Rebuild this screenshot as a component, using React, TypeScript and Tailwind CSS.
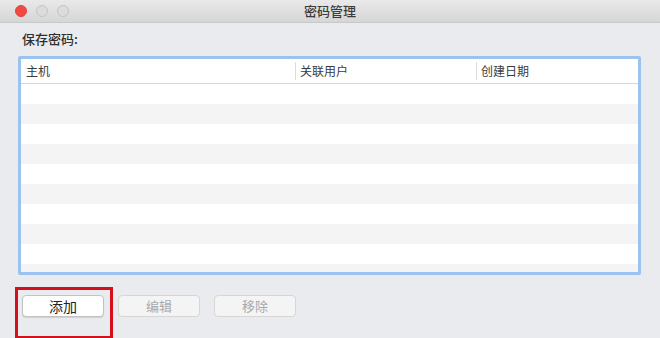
const columns = [
  { title: '主机', width: 'w-[274px]' },
  { title: '关联用户', width: 'w-[181px]' },
  { title: '创建日期', width: 'flex-1' },
];

const rowCount = 10;

export default function App() {
  return (
    <div
      className="relative w-[660px] h-[338px] overflow-hidden bg-[#eaebee] text-[#333]"
      style={{ fontFamily: '"Noto Sans CJK SC", "Noto Sans", sans-serif' }}
    >
      {/* Title bar */}
      <div className="grid grid-cols-[1fr_auto_1fr] items-center h-[23px] border-b border-[#c8c8c8] bg-gradient-to-b from-[#e9e9e9] to-[#d6d6d6]">
        <div className="flex items-center gap-[9px] pl-[15px]">
          <span className="w-[12px] h-[12px] rounded-full bg-[#f04a43] border border-[#e0443e]" />
          <span className="w-[12px] h-[12px] rounded-full bg-[#dcdcdc] border border-[#c4c4c4]" />
          <span className="w-[12px] h-[12px] rounded-full bg-[#dcdcdc] border border-[#c4c4c4]" />
        </div>
        <div className="text-[13px] leading-[16px] font-medium text-[#3c3c3c]">密码管理</div>
        <div />
      </div>

      {/* Body */}
      <div className="px-[18px]">
        <div className="pt-[8px] pl-[4px] text-[13px] leading-[16px] font-medium text-[#2f2f2f]">保存密码:</div>

        {/* Table with focus ring */}
        <div className="mt-[9px] w-[623px] h-[219px] border-[3px] border-[#9cc2f0] rounded-[2px] bg-white overflow-hidden">
          <div className="flex h-[25px] border-b border-[#d6d6d6] bg-white text-[12px] leading-[16px] text-[#3a3a3a]">
            {columns.map((col, i) => (
              <div key={col.title} className={`${col.width} flex items-center`}>
                {i > 0 && <span className="w-px h-[18px] bg-[#dcdcdc]" />}
                <span className={i === 0 ? 'pl-[5px]' : 'pl-[4px]'}>{col.title}</span>
              </div>
            ))}
          </div>
          {Array.from({ length: rowCount }).map((_, i) => (
            <div key={i} className={`h-[20px] ${i % 2 === 1 ? 'bg-[#f4f4f4]' : 'bg-white'}`} />
          ))}
        </div>

        {/* Buttons */}
        <div className="flex gap-[14px] mt-[20px] pl-[4px]">
          <button className="w-[82px] h-[22px] rounded-[4px] border border-[#c3c3c3] bg-white shadow-[0_1px_1px_rgba(0,0,0,0.12)] text-[14px] leading-[16px] text-[#222]">
            添加
          </button>
          <button className="w-[82px] h-[22px] rounded-[4px] border border-[#d6d6d6] bg-[#f4f4f5] text-[13px] leading-[16px] text-[#a9a9a9]">
            编辑
          </button>
          <button className="w-[82px] h-[22px] rounded-[4px] border border-[#d6d6d6] bg-[#f4f4f5] text-[13px] leading-[16px] text-[#a9a9a9]">
            移除
          </button>
        </div>
      </div>

      {/* Annotation box */}
      <div className="absolute left-[15px] top-[287px] w-[98px] h-[52px] border-[3px] border-[#d4101c]" />
    </div>
  );
}
